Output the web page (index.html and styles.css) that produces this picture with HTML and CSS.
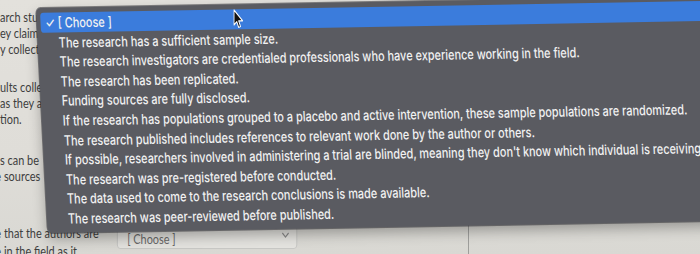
FILE: index.html
```html
<!DOCTYPE html>
<html lang="en">
<head>
<meta charset="utf-8">
<title>Quiz dropdown</title>
<link rel="stylesheet" href="styles.css">
</head>
<body>
<div class="stage">
  <div class="page">
    <div class="grp g1">
      <p>arch studies that</p>
      <p>ey claim to</p>
      <p>y collected</p>
    </div>
    <div class="grp g2">
      <p>ults collected</p>
      <p>as they are</p>
      <p>tion.</p>
    </div>
    <div class="grp g3">
      <p>s can be</p>
      <p class="shift">e sources</p>
    </div>
    <div class="qrow">
      <div class="qtext">
        <p class="shift">e that the authors are</p>
        <p class="shift">e in the field as it</p>
      </div>
      <div class="select">
        <span>[ Choose ]</span>
        <svg class="chev" width="12" height="8" viewBox="0 0 12 8"><path d="M2 2 L6 6 L10 2" fill="none" stroke="#8a8a8a" stroke-width="1.4"/></svg>
      </div>
      <div class="vline"></div>
    </div>
  </div>

  <div class="menu">
    <div class="item sel"><span class="check">✓</span>[ Choose ]</div>
    <div class="item">The research has a sufficient sample size.</div>
    <div class="item">The research investigators are credentialed professionals who have experience working in the field.</div>
    <div class="item">The research has been replicated.</div>
    <div class="item">Funding sources are fully disclosed.</div>
    <div class="item">If the research has populations grouped to a placebo and active intervention, these sample populations are randomized.</div>
    <div class="item">The research published includes references to relevant work done by the author or others.</div>
    <div class="item">If possible, researchers involved in administering a trial are blinded, meaning they don't know which individual is receiving a placebo.</div>
    <div class="item">The research was pre-registered before conducted.</div>
    <div class="item">The data used to come to the research conclusions is made available.</div>
    <div class="item">The research was peer-reviewed before published.</div>
  </div>

  <svg class="cursor" width="13" height="20" viewBox="0 0 13 20">
    <path d="M1 1 L1 16 L4.5 12.6 L7 18.5 L9.4 17.5 L7 11.8 L12 11.8 Z" fill="#111" stroke="#fff" stroke-width="1.2" stroke-linejoin="round"/>
  </svg>
</div>
</body>
</html>
```

FILE: styles.css
```css
html, body {
  margin: 0;
  padding: 0;
  width: 700px;
  height: 254px;
  overflow: hidden;
  background: #dedcd7;
}

.stage {
  position: relative;
  width: 900px;
  height: 254px;
  transform-origin: 0 0;
  transform: scaleX(0.78);
  background: linear-gradient(180deg, #e3e1dc 0%, #dfddd8 60%, #d9d8d3 100%);
  overflow: hidden;
}

.page {
  font-family: Lato, "Open Sans", sans-serif;
  font-size: 14px;
  line-height: 16px;
  color: #3e3e3e;
  padding-top: 9px;
}

.page p {
  margin: 0;
  white-space: nowrap;
}

.page .shift {
  margin-left: -6px;
}

.g2 {
  margin-top: 22px;
}

.g3 {
  margin-top: 25px;
}

.qrow {
  margin-top: 31px;
  display: flex;
  align-items: flex-start;
}

.qtext {
  width: 150px;
  padding-top: 9px;
  line-height: 18px;
}

.select {
  margin-top: 10px;
  width: 231px;
  height: 24px;
  box-sizing: border-box;
  border: 1px solid #c4c4c2;
  border-radius: 4px;
  background: #e4e3df;
  display: flex;
  align-items: center;
  justify-content: space-between;
  padding: 0 8px 0 12px;
  color: #6a6a6a;
}

.select span {
  padding-top: 3px;
}

.chev {
  margin-top: -4px;
}

.vline {
  margin-left: 219px;
  width: 1px;
  height: 60px;
  background: #8e8e8c;
}

.menu {
  position: absolute;
  left: 46px;
  top: 8px;
  width: 1100px;
  padding: 5px 0 4px;
  background: #5a5b61;
  border-radius: 6px;
  transform-origin: 0 0;
  transform: matrix(1, -0.014, 0.067, 1, 0, 0);
  box-shadow: 0 0 0 1px rgba(50, 50, 55, 0.55), 0 6px 14px rgba(0, 0, 0, 0.3);
  font-family: Inter, "Noto Sans", sans-serif;
  font-weight: 500;
  font-size: 14px;
  color: #f1f1f1;
}

.item {
  position: relative;
  height: 19.6px;
  line-height: 19.6px;
  padding-left: 27px;
  white-space: nowrap;
}

.item.sel {
  margin: 0 5px;
  padding-left: 22px;
  background: #3b7cdc;
  border-radius: 4px;
}

.check {
  position: absolute;
  left: 6px;
  top: 0;
}

.cursor {
  position: absolute;
  left: 299px;
  top: 9px;
}
```
